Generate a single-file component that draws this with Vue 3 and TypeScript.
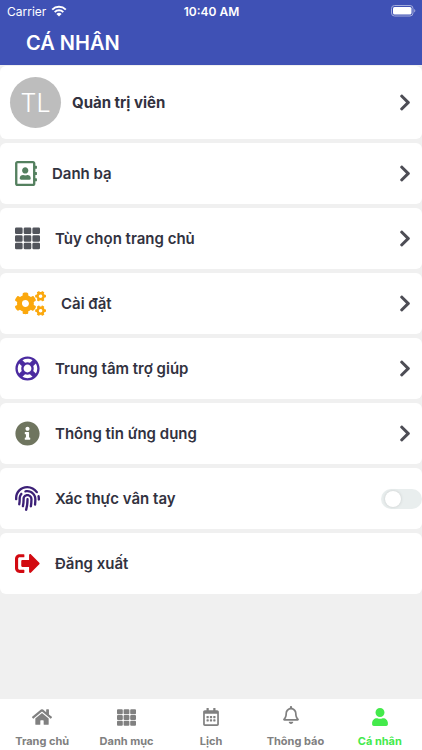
<script setup lang="ts">
import { ref } from 'vue'

interface Glyph {
  box: string
  width: number
  height: number
  color?: string
  d: string
}

interface Row {
  label: string
  icon: Glyph
  kind: 'link' | 'switch' | 'action'
}

interface Tab {
  label: string
  href: string
  badgeRoom?: boolean
  icon: Glyph
}

const square = (x: number, y: number, w: number, h: number, r: number): string =>
  `M${x + r} ${y}h${w - 2 * r}a${r} ${r} 0 0 1 ${r} ${r}v${h - 2 * r}a${r} ${r} 0 0 1 ${-r} ${r}h${2 * r - w}a${r} ${r} 0 0 1 ${-r} ${-r}v${2 * r - h}a${r} ${r} 0 0 1 ${r} ${-r}z`

const gridPath = [32, 188, 344]
  .map((y) => [0, 178, 356].map((x) => square(x, y, 156, 134, 26)).join(''))
  .join('')

const smallGear =
  'l-8.2 14.3c-3 5.3-9.4 7.5-15.1 5.4-11.8-4.4-22.6-10.7-32.1-18.6-4.6-3.8-5.8-10.5-2.8-15.7l8.2-14.3c-6.9-8-12.3-17.3-15.9-27.4h-16.5c-6 0-11.2-4.3-12.2-10.3-2-12-2.1-24.6 0-37.1 1-6 6.2-10.4 12.2-10.4h16.5c3.6-10.1 9-19.4 15.9-27.4l-8.2-14.3c-3-5.2-1.9-11.9 2.8-15.7 9.5-7.9 20.4-14.2 32.1-18.6 5.7-2.1 12.1.1 15.1 5.4l8.2 14.3c10.5-1.9 21.2-1.9 31.7 0l8.2-14.3c3-5.3 9.4-7.5 15.1-5.4 11.8 4.4 22.6 10.7 32.1 18.6 4.6 3.8 5.8 10.5 2.8 15.7l-8.2 14.3c6.9 8 12.3 17.3 15.9 27.4h16.5c6 0 11.2 4.3 12.2 10.3 2 12 2.1 24.6 0 37.1-1 6-6.2 10.4-12.2 10.4h-16.5c-3.6 10.1-9 19.4-15.9 27.4l8.2 14.3c3 5.2 1.9 11.9-2.8 15.7-9.5 7.9-20.4 14.2-32.1 18.6-5.7 2.1-12.1-.1-15.1-5.4l-8.2-14.3c-10.4 1.9-21.2 1.9-31.7 0zm-10.5-58.8c38.5 29.6 82.4-14.3 52.8-52.8-38.5-29.7-82.4 14.3-52.8 52.8z'

const largeGear =
  'M386.3 286.1l33.7 16.8c10.1 5.8 14.5 18.1 10.5 29.1-8.9 24.2-26.4 46.4-42.6 65.8-7.4 8.9-20.2 11.1-30.3 5.3l-29.1-16.8c-16 13.7-34.6 24.6-54.9 31.7v33.6c0 11.6-8.3 21.6-19.7 23.6-24.6 4.2-50.4 4.4-75.9 0-11.5-2-20-11.9-20-23.6V418c-20.3-7.2-38.9-18-54.9-31.7L74 403c-10 5.8-22.9 3.6-30.3-5.3-16.2-19.4-33.3-41.6-42.2-65.7-4-10.9.4-23.2 10.5-29.1l33.3-16.8c-3.9-20.9-3.9-42.4 0-63.4L12 205.8c-10.1-5.8-14.6-18.1-10.5-29 8.9-24.2 26-46.4 42.2-65.8 7.4-8.9 20.2-11.1 30.3-5.3l29.1 16.8c16-13.7 34.6-24.6 54.9-31.7V57.1c0-11.5 8.2-21.5 19.6-23.5 24.6-4.2 50.5-4.4 76-.1 11.5 2 20 11.9 20 23.6v33.6c20.3 7.2 38.9 18 54.9 31.7l29.1-16.8c10-5.8 22.9-3.6 30.3 5.3 16.2 19.4 33.2 41.6 42.1 65.8 4 10.9.1 23.2-10 29.1l-33.7 16.8c3.9 21 3.9 42.5 0 63.5zm-117.6 21.1c59.2-77-28.7-164.9-105.7-105.7-59.2 77 28.7 164.9 105.7 105.7z'

const day = (x: number, y: number): string => square(x, y, 64, 64, 12)

const rows: Row[] = [
  {
    label: 'Danh bạ',
    kind: 'link',
    icon: {
      box: '0 0 448 512', width: 22, height: 25, color: '#54805f',
      d: 'M436 160c6.6 0 12-5.4 12-12v-40c0-6.6-5.4-12-12-12h-20V48c0-26.5-21.5-48-48-48H48C21.5 0 0 21.5 0 48v416c0 26.5 21.5 48 48 48h320c26.5 0 48-21.5 48-48v-48h20c6.6 0 12-5.4 12-12v-40c0-6.6-5.4-12-12-12h-20v-64h20c6.6 0 12-5.4 12-12v-40c0-6.6-5.4-12-12-12h-20v-64h20zm-68 304H48V48h320v416zM208 256c35.3 0 64-28.7 64-64s-28.7-64-64-64-64 28.7-64 64 28.7 64 64 64zm-89.6 128h179.2c12.4 0 22.4-8.6 22.4-19.2v-19.2c0-31.8-30.1-57.6-67.2-57.6-10.8 0-18.7 8-44.8 8-26.9 0-33.4-8-44.8-8-37.1 0-67.2 25.8-67.2 57.6v19.2c0 10.6 10 19.2 22.4 19.2z',
    },
  },
  {
    label: 'Tùy chọn trang chủ',
    kind: 'link',
    icon: { box: '0 0 512 512', width: 25, height: 25, color: '#52555c', d: gridPath },
  },
  {
    label: 'Cài đặt',
    kind: 'link',
    icon: {
      box: '0 0 640 512', width: 31, height: 25, color: '#fba80d',
      d: `M512.1 191${smallGear}${largeGear}M512.1 489.7${smallGear}`,
    },
  },
  {
    label: 'Trung tâm trợ giúp',
    kind: 'link',
    icon: {
      box: '0 0 512 512', width: 25, height: 25, color: '#4b2ba0',
      d: 'M256 504c136.967 0 248-111.033 248-248S392.967 8 256 8 8 119.033 8 256s111.033 248 248 248zm-103.398-76.72l53.411-53.411c31.806 13.506 68.128 13.522 99.974 0l53.411 53.411c-63.217 38.319-143.579 38.319-206.796 0zM336 256c0 44.112-35.888 80-80 80s-80-35.888-80-80 35.888-80 80-80 80 35.888 80 80zm91.28 103.398l-53.411-53.411c13.505-31.806 13.522-68.128 0-99.974l53.411-53.411c38.319 63.216 38.319 143.578 0 206.796zM359.397 84.72l-53.411 53.411c-31.806-13.505-68.128-13.522-99.973 0L152.602 84.72c63.217-38.319 143.579-38.319 206.795 0zM84.72 152.602l53.411 53.411c-13.506 31.806-13.522 68.128 0 99.974L84.72 359.398c-38.319-63.217-38.319-143.579 0-206.796z',
    },
  },
  {
    label: 'Thông tin ứng dụng',
    kind: 'link',
    icon: {
      box: '0 0 512 512', width: 25, height: 25, color: '#6f755f',
      d: 'M256 8C119.043 8 8 119.083 8 256c0 136.997 111.043 248 248 248s248-111.003 248-248C504 119.083 392.957 8 256 8zm0 110c23.196 0 42 18.804 42 42s-18.804 42-42 42-42-18.804-42-42 18.804-42 42-42zm56 254c0 6.627-5.373 12-12 12h-88c-6.627 0-12-5.373-12-12v-24c0-6.627 5.373-12 12-12h12v-64h-12c-6.627 0-12-5.373-12-12v-24c0-6.627 5.373-12 12-12h64c6.627 0 12 5.373 12 12v100h12c6.627 0 12 5.373 12 12v24z',
    },
  },
  {
    label: 'Xác thực vân tay',
    kind: 'switch',
    icon: {
      box: '0 0 512 512', width: 25, height: 25, color: '#3c2077',
      d: 'M256.12 245.96c-13.25 0-24 10.74-24 24 1.14 72.25-8.14 141.9-27.7 211.55-2.73 9.72 2.15 30.49 23.12 30.49 10.48 0 20.11-6.92 23.09-17.52 13.53-47.91 31.04-125.41 29.48-224.52.01-13.25-10.73-24-23.99-24zm-.86-81.73C194 164.16 151.25 211.3 152.1 265.32c.75 47.94-3.75 95.91-13.37 142.55-2.69 12.98 5.67 25.69 18.64 28.36 13.05 2.67 25.67-5.66 28.36-18.64 10.34-50.09 15.17-101.58 14.37-153.02-.41-25.95 19.92-52.49 54.45-52.34 31.31.47 57.15 25.34 57.62 55.47.77 48.05-2.81 96.33-10.61 143.55-2.17 13.06 6.69 25.42 19.76 27.58 19.97 3.33 26.81-15.1 27.58-19.77 8.28-50.03 12.06-101.21 11.27-152.11-.88-55.8-47.94-101.88-104.91-102.72zm-110.69-19.78c-10.3-8.34-25.37-6.8-33.76 3.48-25.62 31.5-39.39 71.28-38.75 112 .59 37.58-2.47 75.27-9.11 112.05-2.34 13.05 6.31 25.53 19.36 27.89 20.11 3.5 27.07-14.81 27.89-19.36 7.19-39.84 10.5-80.66 9.86-121.33-.47-29.88 9.2-57.88 28-80.97 8.35-10.28 6.79-25.39-3.49-33.76zm109.47-62.33c-15.41-.41-30.87 1.44-45.78 4.97-12.89 3.06-20.87 15.98-17.83 28.89 3.06 12.89 16 20.83 28.89 17.83 11.05-2.61 22.47-3.77 34-3.69 75.43 1.13 137.73 61.5 138.88 134.58.59 37.88-1.28 76.11-5.58 113.63-1.5 13.17 7.95 25.08 21.11 26.58 16.72 1.95 25.51-11.88 26.58-21.11a929.06 929.06 0 0 0 5.89-119.85c-1.56-98.75-85.07-180.33-186.16-181.83zm252.07 121.45c-2.86-12.92-15.51-21.2-28.61-18.27-12.94 2.86-21.12 15.66-18.26 28.61 4.71 21.41 4.91 37.41 4.7 61.6-.11 13.27 10.55 24.09 23.8 24.2h.2c13.17 0 23.89-10.61 24-23.8.18-22.18.4-44.11-5.83-72.34zm-40.12-90.72C417.29 43.46 337.6 1.29 252.81.02 183.02-.82 118.47 24.91 70.46 72.94 24.09 119.37-.9 181.04.14 246.65l-.12 21.47c-.39 13.25 10.03 24.31 23.28 24.69.23.02.48.02.72.02 12.92 0 23.59-10.3 23.97-23.3l.16-23.64c-.83-52.5 19.16-101.86 56.28-139 38.76-38.8 91.34-59.67 147.68-58.86 69.45 1.03 134.73 35.56 174.62 92.39 7.61 10.86 22.56 13.45 33.42 5.86 10.84-7.62 13.46-22.59 5.84-33.43z',
    },
  },
  {
    label: 'Đăng xuất',
    kind: 'action',
    icon: {
      box: '0 0 512 512', width: 25, height: 25, color: '#d20a11',
      d: 'M497 273L329 441c-15 15-41 4.5-41-17v-96H152c-13.3 0-24-10.7-24-24v-96c0-13.3 10.7-24 24-24h136V88c0-21.4 25.9-32 41-17l168 168c9.3 9.4 9.3 24.6 0 34zM192 436v-40c0-6.6-5.4-12-12-12H96c-17.7 0-32-14.3-32-32V160c0-17.7 14.3-32 32-32h84c6.6 0 12-5.4 12-12V76c0-6.6-5.4-12-12-12H96c-53 0-96 43-96 96v192c0 53 43 96 96 96h84c6.6 0 12-5.4 12-12z',
    },
  },
]

const tabs: Tab[] = [
  {
    label: 'Trang chủ',
    href: '#trang-chu',
    icon: {
      box: '0 0 576 512', width: 20, height: 18,
      d: 'M280.37 148.26L96 300.11V464a16 16 0 0 0 16 16l112.06-.29a16 16 0 0 0 15.92-16V368a16 16 0 0 1 16-16h64a16 16 0 0 1 16 16v95.64a16 16 0 0 0 16 16.05L464 480a16 16 0 0 0 16-16V300L295.67 148.26a12.19 12.19 0 0 0-15.3 0zM571.6 251.47L488 182.56V44.05a12 12 0 0 0-12-12h-56a12 12 0 0 0-12 12v72.61L318.47 43a48 48 0 0 0-61 0L4.34 251.47a12 12 0 0 0-1.6 16.9l25.5 31A12 12 0 0 0 45.15 301l235.22-193.74a12.19 12.19 0 0 1 15.3 0L530.9 301a12 12 0 0 0 16.9-1.6l25.5-31a12 12 0 0 0-1.7-16.93z',
    },
  },
  {
    label: 'Danh mục',
    href: '#danh-muc',
    icon: { box: '0 0 512 512', width: 19, height: 19, d: gridPath },
  },
  {
    label: 'Lịch',
    href: '#lich',
    icon: {
      box: '0 0 448 512', width: 16, height: 18,
      d: `${day(96, 224)}${day(192, 224)}${day(288, 224)}${day(96, 320)}${day(192, 320)}${day(288, 320)}M448 112v352c0 26.5-21.5 48-48 48H48c-26.5 0-48-21.5-48-48V112c0-26.5 21.5-48 48-48h48V12c0-6.6 5.4-12 12-12h40c6.6 0 12 5.4 12 12v52h128V12c0-6.6 5.4-12 12-12h40c6.6 0 12 5.4 12 12v52h48c26.5 0 48 21.5 48 48zm-48 346V160H48v298c0 3.3 2.7 6 6 6h340c3.3 0 6-2.7 6-6z`,
    },
  },
  {
    label: 'Thông báo',
    href: '#thong-bao',
    badgeRoom: true,
    icon: {
      box: '0 0 448 512', width: 16, height: 18,
      d: 'M439.39 362.29c-19.32-20.76-55.47-51.99-55.47-154.29 0-77.7-54.48-139.9-127.94-155.16V32c0-17.67-14.32-32-31.98-32s-31.98 14.33-31.98 32v20.84C118.56 68.1 64.08 130.3 64.08 208c0 102.3-36.15 133.53-55.47 154.29-6 6.45-8.66 14.16-8.61 21.71.11 16.4 12.98 32 32.1 32h383.8c19.12 0 32-15.6 32.1-32 .05-7.55-2.61-15.27-8.61-21.71zM67.53 368c21.22-27.97 44.42-74.33 44.53-159.42 0-.2-.06-.38-.06-.58 0-61.86 50.14-112 112-112s112 50.14 112 112c0 .2-.06.38-.06.58.11 85.1 23.31 131.46 44.53 159.42H67.53zM224 512c35.32 0 63.97-28.65 63.97-64H160.03c0 35.35 28.65 64 63.97 64z',
    },
  },
  {
    label: 'Cá nhân',
    href: '#ca-nhan',
    icon: {
      box: '0 0 448 512', width: 16, height: 18,
      d: 'M224 256c70.7 0 128-57.3 128-128S294.7 0 224 0 96 57.3 96 128s57.3 128 128 128zm89.6 32h-16.7c-22.2 10.2-46.9 16-72.9 16s-50.6-5.8-72.9-16h-16.7C60.2 288 0 348.2 0 422.4V464c0 26.5 21.5 48 48 48h352c26.5 0 48-21.5 48-48v-41.6c0-74.2-60.2-134.4-134.4-134.4z',
    },
  },
]

const chevron =
  'M285.476 272.971L91.132 467.314c-9.373 9.373-24.569 9.373-33.941 0l-22.667-22.667c-9.357-9.357-9.375-24.522-.04-33.901L188.505 256 34.484 101.255c-9.335-9.379-9.317-24.544.04-33.901l22.667-22.667c9.373-9.373 24.569-9.373 33.941 0L285.475 239.03c9.373 9.372 9.373 24.568.001 33.941z'

const activeTab = ref('Cá nhân')
const fingerprint = ref(false)
</script>

<template>
  <div class="screen">
    <header class="header">
      <div class="status">
        <span class="carrier">
          Carrier
          <svg class="wifi" viewBox="0 0 16 12" width="16" height="12" aria-hidden="true">
            <path d="M1.2 4.6a9.8 9.8 0 0 1 13.6 0M3.7 7.1a6.2 6.2 0 0 1 8.6 0" />
            <path class="wifi-dot" d="M8 11.6L5.4 9a3.8 3.8 0 0 1 5.2 0z" />
          </svg>
        </span>
        <span class="clock">10:40 AM</span>
        <svg class="battery" viewBox="0 0 25 12" width="25" height="12" aria-hidden="true">
          <rect class="battery-case" x="0.5" y="0.5" width="21.5" height="10.5" rx="3" />
          <rect x="2" y="2" width="18.5" height="7.5" rx="1.5" />
          <path class="battery-tip" d="M23.2 4a2 2 0 0 1 0 3.6z" />
        </svg>
      </div>
      <h1 class="title">CÁ NHÂN</h1>
    </header>

    <main class="list">
      <button type="button" class="row profile">
        <span class="avatar">TL</span>
        <span class="name">Quản trị viên</span>
        <svg class="chevron" viewBox="0 0 320 512" width="12" height="19" aria-hidden="true"><path :d="chevron" /></svg>
      </button>

      <template v-for="row in rows" :key="row.label">
        <label v-if="row.kind === 'switch'" class="row has-switch">
          <svg :viewBox="row.icon.box" :width="row.icon.width" :height="row.icon.height" :fill="row.icon.color" aria-hidden="true">
            <path :d="row.icon.d" />
          </svg>
          <span class="label">{{ row.label }}</span>
          <input v-model="fingerprint" class="switch" type="checkbox" role="switch" />
        </label>
        <button v-else type="button" class="row">
          <svg :viewBox="row.icon.box" :width="row.icon.width" :height="row.icon.height" :fill="row.icon.color" aria-hidden="true">
            <path :d="row.icon.d" />
          </svg>
          <span class="label">{{ row.label }}</span>
          <svg v-if="row.kind === 'link'" class="chevron" viewBox="0 0 320 512" width="12" height="19" aria-hidden="true"><path :d="chevron" /></svg>
        </button>
      </template>
    </main>

    <nav class="tabs">
      <a
        v-for="tab in tabs"
        :key="tab.label"
        class="tab"
        :class="{ active: tab.label === activeTab }"
        :href="tab.href"
        @click.prevent="activeTab = tab.label"
      >
        <span class="tab-icon" :class="{ 'badge-room': tab.badgeRoom }">
          <svg :viewBox="tab.icon.box" :width="tab.icon.width" :height="tab.icon.height" fill="currentColor" aria-hidden="true">
            <path :d="tab.icon.d" />
          </svg>
        </span>
        {{ tab.label }}
      </a>
    </nav>
  </div>
</template>

<style>
body {
  background: #f0f0f0;
}
</style>

<style scoped>
.screen {
  display: flex;
  flex-direction: column;
  min-height: 100vh;
  background: #f0f0f0;
  color: #32323f;
  font-family: Inter, 'Noto Sans', sans-serif;
}

.header {
  padding-bottom: 8px;
  background: #3f51b5;
  color: #fff;
}

.status {
  display: grid;
  grid-template-columns: 1fr auto 1fr;
  align-items: center;
  height: 22px;
  padding: 0 6px 0 7px;
  font-size: 12px;
}

.carrier {
  display: flex;
  align-items: center;
  gap: 5px;
}

.wifi {
  fill: none;
  stroke: #fff;
  stroke-width: 2;
}

.wifi-dot {
  fill: #fff;
  stroke: none;
}

.clock {
  font-weight: 600;
}

.battery {
  justify-self: end;
  fill: #fff;
}

.battery-case {
  fill: none;
  stroke: #a3acdb;
}

.battery-tip {
  fill: #a3acdb;
}

.title {
  margin: 0;
  padding: 8px 26px 0;
  font-size: 20px;
  line-height: 27px;
  font-weight: 600;
}

.list {
  display: flex;
  flex: 1;
  flex-direction: column;
  gap: 4px;
  padding: 1px 0 4px;
}

.row {
  display: flex;
  align-items: center;
  gap: 15px;
  box-sizing: border-box;
  width: 100%;
  min-height: 61px;
  margin: 0;
  padding: 0 11px 0 15px;
  border: 0;
  border-radius: 6px;
  background: #fff;
  color: inherit;
  font: inherit;
  font-size: 15px;
  font-weight: 600;
  text-align: left;
  cursor: pointer;
}

.profile {
  gap: 11px;
  min-height: 73px;
  padding-left: 10px;
}

.avatar {
  display: flex;
  align-items: center;
  justify-content: center;
  width: 51px;
  height: 51px;
  border-radius: 50%;
  background: #bdbdbd;
  color: #fff;
  font-size: 25px;
  font-weight: 300;
}

.name {
  flex: 1;
  font-weight: 700;
}

.label {
  flex: 1;
}

.chevron {
  fill: #4d4d55;
}

.has-switch {
  padding-right: 0;
}

.switch {
  display: flex;
  align-items: center;
  appearance: none;
  box-sizing: border-box;
  width: 41px;
  height: 20px;
  margin: 0;
  padding: 2px 4px;
  border-radius: 10px;
  background: #e9eeee;
  cursor: pointer;
}

.switch::before {
  width: 16px;
  height: 16px;
  border-radius: 50%;
  background: #fff;
  box-shadow: 0 0 3px #c4c8c8;
  content: '';
}

.switch:checked {
  justify-content: flex-end;
  background: #43ea4b;
}

.tabs {
  display: grid;
  grid-template-columns: repeat(5, 1fr);
  padding: 7px 0 1px;
  background: #fff;
}

.tab {
  display: flex;
  flex-direction: column;
  align-items: center;
  gap: 5px;
  color: #808080;
  font-size: 11px;
  line-height: 16px;
  font-weight: 700;
  text-decoration: none;
}

.tab-icon {
  display: flex;
  align-items: center;
  height: 22px;
}

.badge-room {
  align-items: flex-start;
  padding-right: 8px;
}

.tab.active {
  color: #43ea4b;
}
</style>
